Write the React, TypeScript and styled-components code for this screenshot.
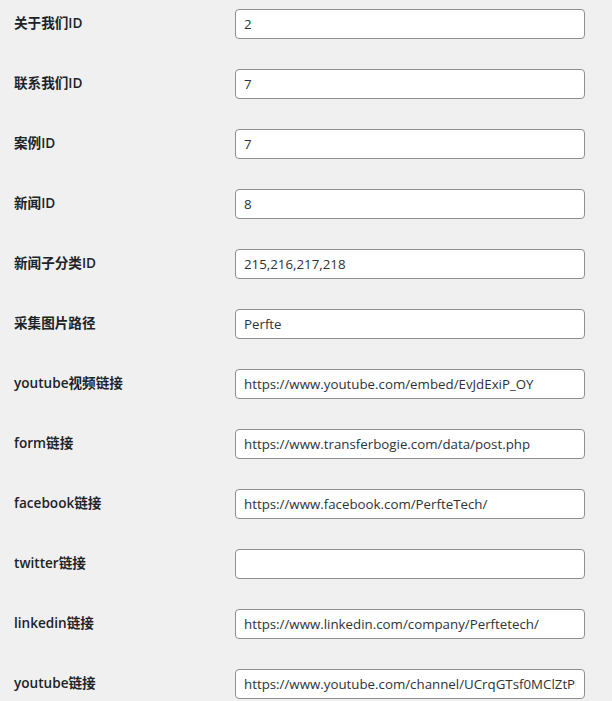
import React from "react";
import styled, { createGlobalStyle } from "styled-components";

const Global = createGlobalStyle`
  html, body { margin: 0; padding: 0; background: #f0f0f1; }
  body {
    font-family: "Open Sans", "Noto Sans CJK SC", sans-serif;
    color: #1d2327;
    font-size: 14px;
  }
`;

const Form = styled.div`
  display: flex;
  flex-direction: column;
  padding-left: 14px;
`;

const Row = styled.div`
  display: grid;
  grid-template-columns: 221px 350px;
  height: 60px;
  box-sizing: border-box;
  padding-top: 9px;
`;

const Label = styled.label`
  font-weight: 600;
  font-size: 13.6px;
  line-height: 1.3;
  padding-top: 5px;
  color: #1d2327;
`;

const Input = styled.input`
  box-sizing: border-box;
  width: 350px;
  height: 30px;
  margin: 0;
  padding: 0 8px;
  border: 1px solid #8c8f94;
  border-radius: 4px;
  background: #fff;
  color: #2c3338;
  font-family: "Open Sans", "Noto Sans CJK SC", sans-serif;
  font-size: 13.3px;
  line-height: 2;
  outline: none;
`;

const fields: [string, string][] = [
  ["关于我们ID", "2"],
  ["联系我们ID", "7"],
  ["案例ID", "7"],
  ["新闻ID", "8"],
  ["新闻子分类ID", "215,216,217,218"],
  ["采集图片路径", "Perfte"],
  ["youtube视频链接", "https://www.youtube.com/embed/EvJdExiP_OY"],
  ["form链接", "https://www.transferbogie.com/data/post.php"],
  ["facebook链接", "https://www.facebook.com/PerfteTech/"],
  ["twitter链接", ""],
  ["linkedin链接", "https://www.linkedin.com/company/Perftetech/"],
  ["youtube链接", "https://www.youtube.com/channel/UCrqGTsf0MClZtPiAbcdEf"],
];

export default function App() {
  return (
    <>
      <Global />
      <Form>
        {fields.map(([label, value], i) => (
          <Row key={i}>
            <Label>{label}</Label>
            <Input type="text" defaultValue={value} readOnly />
          </Row>
        ))}
      </Form>
    </>
  );
}
